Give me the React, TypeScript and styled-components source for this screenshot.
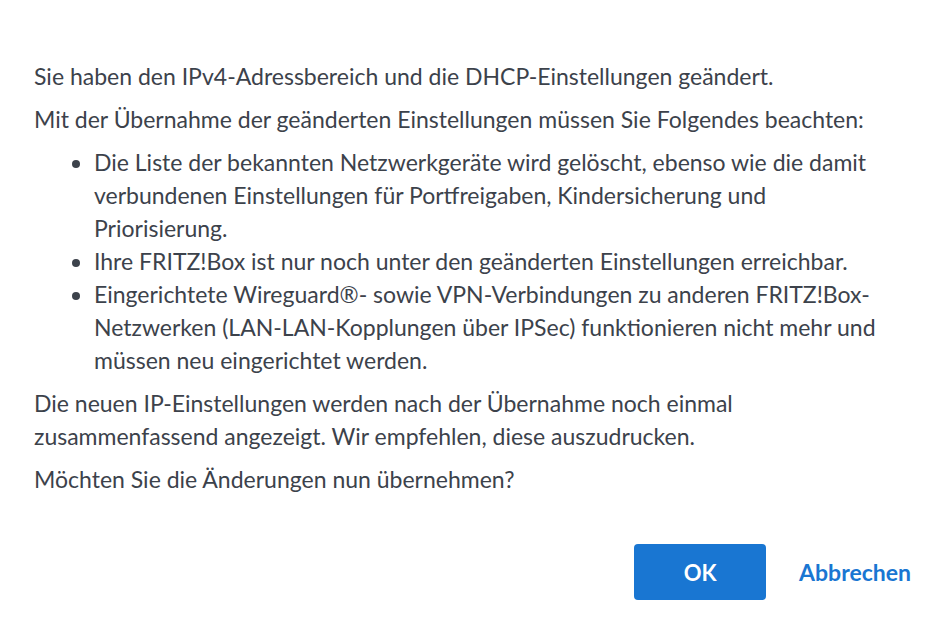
import styled, { createGlobalStyle } from "styled-components";

const GlobalStyle = createGlobalStyle`
  html, body {
    margin: 0;
    padding: 0;
    background: #ffffff;
  }
  body {
    font-family: Lato, "Open Sans", sans-serif;
  }
`;

const Dialog = styled.div`
  width: 948px;
  height: 632px;
  box-sizing: border-box;
  padding: 60px 37px 0 34px;
  display: flex;
  flex-direction: column;
  color: #3c424b;
  font-size: 23px;
  line-height: 33px;
`;

const Body = styled.div`
  max-width: 856px;
`;

const Text = styled.p`
  margin: 0 0 10px 0;
`;

const List = styled.ul`
  margin: 0 0 10px 0;
  padding: 0 0 0 60px;
  list-style: disc;
`;

const Actions = styled.div`
  display: flex;
  justify-content: flex-end;
  align-items: center;
  gap: 33px;
  margin-top: 38px;
`;

const PrimaryButton = styled.button`
  width: 132px;
  height: 56px;
  border: none;
  border-radius: 4px;
  background: #1976d2;
  color: #ffffff;
  font-family: inherit;
  font-size: 22px;
  font-weight: 700;
  cursor: pointer;
`;

const LinkButton = styled.button`
  border: none;
  background: none;
  padding: 0;
  color: #1976d2;
  font-family: inherit;
  font-size: 23px;
  font-weight: 700;
  cursor: pointer;
`;

export default function App() {
  return (
    <>
      <GlobalStyle />
      <Dialog>
        <Body>
          <Text>Sie haben den IPv4-Adressbereich und die DHCP-Einstellungen geändert.</Text>
          <Text>Mit der Übernahme der geänderten Einstellungen müssen Sie Folgendes beachten:</Text>
          <List>
            <li>
              Die Liste der bekannten Netzwerkgeräte wird gelöscht, ebenso wie die damit verbundenen
              Einstellungen für Portfreigaben, Kindersicherung und Priorisierung.
            </li>
            <li>Ihre FRITZ!Box ist nur noch unter den geänderten Einstellungen erreichbar.</li>
            <li>
              Eingerichtete Wireguard®- sowie VPN-Verbindungen zu anderen FRITZ!Box-Netzwerken
              (LAN-LAN-Kopplungen über IPSec) funktionieren nicht mehr und müssen neu eingerichtet
              werden.
            </li>
          </List>
          <Text>
            Die neuen IP-Einstellungen werden nach der Übernahme noch einmal zusammenfassend
            angezeigt. Wir empfehlen, diese auszudrucken.
          </Text>
          <Text>Möchten Sie die Änderungen nun übernehmen?</Text>
        </Body>
        <Actions>
          <PrimaryButton>OK</PrimaryButton>
          <LinkButton>Abbrechen</LinkButton>
        </Actions>
      </Dialog>
    </>
  );
}
